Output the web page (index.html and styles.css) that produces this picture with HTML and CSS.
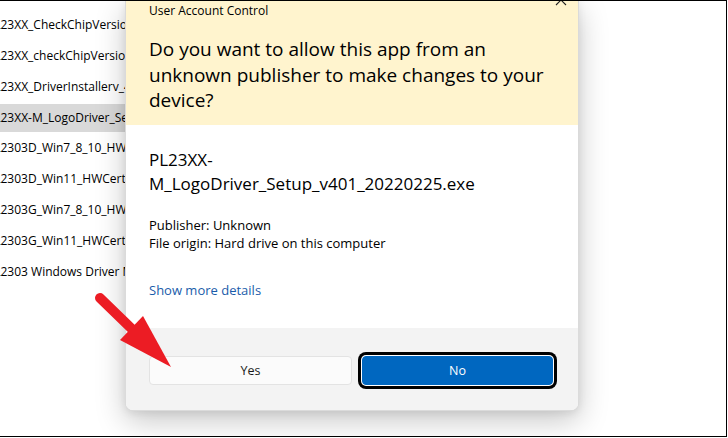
FILE: index.html
```html
<!DOCTYPE html>
<html lang="en">
<head>
<meta charset="utf-8">
<title>User Account Control</title>
<link rel="stylesheet" href="styles.css">
</head>
<body>
<div class="screen">
  <ul class="files">
    <li>PLjson</li>
    <li>PL23XX_CheckChipVersion_v1.0.0</li>
    <li>PL23XX_checkChipVersion_v1.0.1</li>
    <li>PL23XX_DriverInstallerv_4.3.0</li>
    <li class="sel">PL23XX-M_LogoDriver_Setup_v401</li>
    <li>PL2303D_Win7_8_10_HWCertReport</li>
    <li>PL2303D_Win11_HWCertReport</li>
    <li>PL2303G_Win7_8_10_HWCertReport</li>
    <li>PL2303G_Win11_HWCertReport</li>
    <li>PL2303 Windows Driver Manual</li>
  </ul>

  <div class="dialog">
    <div class="head">
      <div class="title">User Account Control</div>
      <svg class="close" width="12" height="12" viewBox="0 0 12 12"><path d="M1 1L11 11M11 1L1 11" stroke="#222" stroke-width="1.1" fill="none"/></svg>
      <div class="question">Do you want to allow this app from an<br>unknown publisher to make changes to your<br>device?</div>
    </div>
    <div class="body">
      <div class="fname">PL23XX-<br>M_LogoDriver_Setup_v401_20220225.exe</div>
      <div class="meta">Publisher: Unknown<br>File origin: Hard drive on this computer</div>
      <div class="more">Show more details</div>
    </div>
    <div class="foot">
      <div class="btn yes">Yes</div>
      <div class="btn no">No</div>
    </div>
  </div>

  <svg class="arrow" width="728" height="438" viewBox="0 0 728 438">
    <line x1="100" y1="298" x2="134" y2="331" stroke="#ec1c24" stroke-width="10" stroke-linecap="round"/>
    <polygon points="120,340 143,316 171,367" fill="#ec1c24"/>
  </svg>
</div>
</body>
</html>
```

FILE: styles.css
```css
* { box-sizing: border-box; }
html, body { margin: 0; padding: 0; background: #fff; }
body { font-family: "Open Sans", "Noto Sans", sans-serif; color: #000; }

.screen {
  position: relative;
  width: 727px;
  height: 437px;
  border-top: 1px solid #000;
  border-right: 1px solid #000;
  border-bottom: 1px solid #000;
  overflow: hidden;
  background: #fff;
}

.files {
  list-style: none;
  margin: -21px 0 0 -15px;
  padding: 0;
  width: 160px;
  display: flex;
  flex-direction: column;
  gap: 2.875px;
}
.files li {
  height: 28px;
  line-height: 28px;
  font-size: 12px;
  white-space: nowrap;
  overflow: hidden;
  padding-left: 2px;
}
.files li.sel { background: #d9d9d9; }

.dialog {
  position: absolute;
  left: 125px;
  top: -1px;
  width: 454px;
  border: 1px solid rgba(0,0,0,0.14);
  border-top: none;
  border-radius: 0 0 8px 8px;
  background: #fff;
  box-shadow: 0 10px 30px rgba(0,0,0,0.22), 0 2px 8px rgba(0,0,0,0.08);
}

.head {
  position: relative;
  background: #fff4ce;
  padding: 3px 23px 11.5px;
}
.title { font-size: 12px; line-height: 16px; }
.close { position: absolute; right: 11px; top: -6px; }
.question {
  margin-top: 18px;
  font-size: 19px;
  line-height: 25.5px;
  white-space: nowrap;
}

.body { padding: 23px 23px 29px; }
.fname { font-size: 17px; line-height: 24px; white-space: nowrap; }
.meta { margin-top: 20px; font-size: 13px; line-height: 18px; }
.more { margin-top: 29px; font-size: 13px; line-height: 18px; color: #1a5caa; }

.foot {
  background: #f3f3f3;
  padding: 28px 0 25px 23px;
  display: flex;
  gap: 10px;
  border-radius: 0 0 7px 7px;
}
.btn {
  height: 29px;
  line-height: 27px;
  text-align: center;
  font-size: 12.5px;
  border-radius: 4px;
}
.yes {
  width: 203px;
  background: #fbfbfb;
  border: 1px solid #e3e3e3;
  color: #1a1a1a;
}
.no {
  width: 191px;
  background: #0067c0;
  color: #fff;
  border: 1px solid #0067c0;
  box-shadow: 0 0 0 1px #fff, 0 0 0 4px #000;
  border-radius: 4px;
}

.arrow { position: absolute; left: 0; top: -1px; }
```
